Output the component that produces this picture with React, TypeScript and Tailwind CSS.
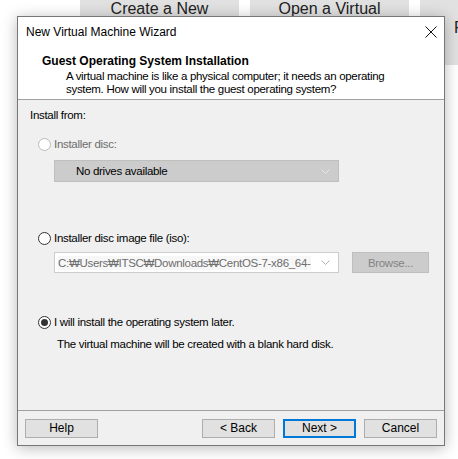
// New Virtual Machine Wizard — guest OS installation step.

function Radio({ checked, disabled }: { checked?: boolean; disabled?: boolean }) {
  return (
    <span
      className={`flex h-[13px] w-[13px] shrink-0 items-center justify-center rounded-full border bg-white ${
        disabled ? 'border-[#bcbcbc]' : 'border-[#333333]'
      }`}
    >
      {checked && <span className="h-[7px] w-[7px] rounded-full bg-[#333333]" />}
    </span>
  );
}

function Chevron({ color }: { color: string }) {
  return (
    <svg width="9" height="5" viewBox="0 0 9 5" fill="none" className="shrink-0">
      <path d="M0.5 0.5 L4.5 4.5 L8.5 0.5" stroke={color} strokeWidth="1" />
    </svg>
  );
}

function Btn({ label, primary }: { label: string; primary?: boolean }) {
  return (
    <div
      className={`flex h-[19px] w-[73px] items-center justify-center bg-[#e1e1e1] text-[12px] text-black ${
        primary ? 'border-2 border-[#0078d7]' : 'border border-[#adadad]'
      }`}
    >
      {label}
    </div>
  );
}

export default function App() {
  return (
    <div
      className="relative h-[459px] w-[458px] overflow-hidden bg-white"
      style={{ fontFamily: '"Liberation Sans", "Noto Sans CJK KR", sans-serif' }}
    >
      {/* main window behind the wizard */}
      <div className="-mt-[15px] ml-[80px] flex gap-[11px]">
        <div className="flex h-[80px] w-[159px] shrink-0 justify-center bg-[#e1e1e1] pt-[15px] text-[16px] leading-[18px] text-[#222]">
          Create a New
        </div>
        <div className="flex h-[80px] w-[159px] shrink-0 justify-center bg-[#e1e1e1] pt-[15px] text-[16px] leading-[18px] text-[#222]">
          Open a Virtual
        </div>
        <div className="flex h-[80px] w-[159px] shrink-0 bg-[#e1e1e1] pl-[34px] pt-[34px] text-[16px] leading-[18px] text-[#222]">
          Register
        </div>
      </div>

      {/* wizard dialog */}
      <div className="absolute left-[17px] top-[16px] flex h-[430px] w-[428px] flex-col border border-[#777777] bg-[#f0f0f0] shadow-[0_2px_14px_rgba(0,0,0,0.28)]">
        <div className="bg-white">
          <div className="flex h-[30px] items-center justify-between pl-[8px] pr-[7px]">
            <span className="text-[12px] text-black">New Virtual Machine Wizard</span>
            <svg width="12" height="12" viewBox="0 0 12 12">
              <path d="M0.5 0.5 L11.5 11.5 M11.5 0.5 L0.5 11.5" stroke="#111" strokeWidth="1" />
            </svg>
          </div>
          <div className="h-[52px] pl-[24px] pt-[7px]">
            <div className="text-[12px] font-bold leading-[14px] text-black">
              Guest Operating System Installation
            </div>
            <div className="mt-[2px] pl-[24px] text-[11.5px] leading-[13px] tracking-[-0.3px] text-black">
              A virtual machine is like a physical computer; it needs an operating
              <br />
              system. How will you install the guest operating system?
            </div>
          </div>
        </div>
        <div className="h-px bg-[#a0a0a0]" />

        <div className="flex-1 text-[11.5px] leading-[14px] tracking-[-0.3px] text-black">
          <div className="ml-[12px] mt-[8px]">Install from:</div>

          <div className="ml-[20px] mt-[15px] flex items-center gap-[3px] text-[#6d6d6d]">
            <Radio disabled />
            <span>Installer disc:</span>
          </div>
          <div className="ml-[36px] mt-[9px] flex h-[22px] w-[285px] items-center justify-between border border-[#bfbfbf] bg-[#cccccc] pl-[21px] pr-[8px]">
            <span>No drives available</span>
            <Chevron color="#e8e8e8" />
          </div>

          <div className="ml-[20px] mt-[49px] flex items-center gap-[3px]">
            <Radio />
            <span>Installer disc image file (iso):</span>
          </div>
          <div className="ml-[36px] mt-[7px] flex items-center gap-[13px]">
            <div className="flex h-[21px] w-[285px] items-center gap-[10px] border border-[#cccccc] bg-white pl-[3px] pr-[8px]">
              <div className="min-w-0 flex-1 overflow-hidden">
                <span className="block w-[262px] overflow-hidden whitespace-nowrap bg-[#f7f7f7] text-[#6d6d6d]">
                  C:₩Users₩ITSC₩Downloads₩CentOS-7-x86_64-DV
                </span>
              </div>
              <Chevron color="#b0b0b0" />
            </div>
            <div className="flex h-[21px] w-[77px] items-center justify-center border border-[#bfbfbf] bg-[#cccccc] text-[#838383]">
              Browse...
            </div>
          </div>

          <div className="ml-[20px] mt-[42px] flex items-center gap-[3px]">
            <Radio checked />
            <span>I will install the operating system later.</span>
          </div>
          <div className="ml-[39px] mt-[8px]">
            The virtual machine will be created with a blank hard disk.
          </div>
        </div>

        <div className="h-px bg-[#a0a0a0]" />
        <div className="flex h-[34px] items-center px-[7px]">
          <Btn label="Help" />
          <div className="ml-auto flex gap-[8px]">
            <Btn label="< Back" />
            <Btn label="Next >" primary />
            <Btn label="Cancel" />
          </div>
        </div>
      </div>
    </div>
  );
}
